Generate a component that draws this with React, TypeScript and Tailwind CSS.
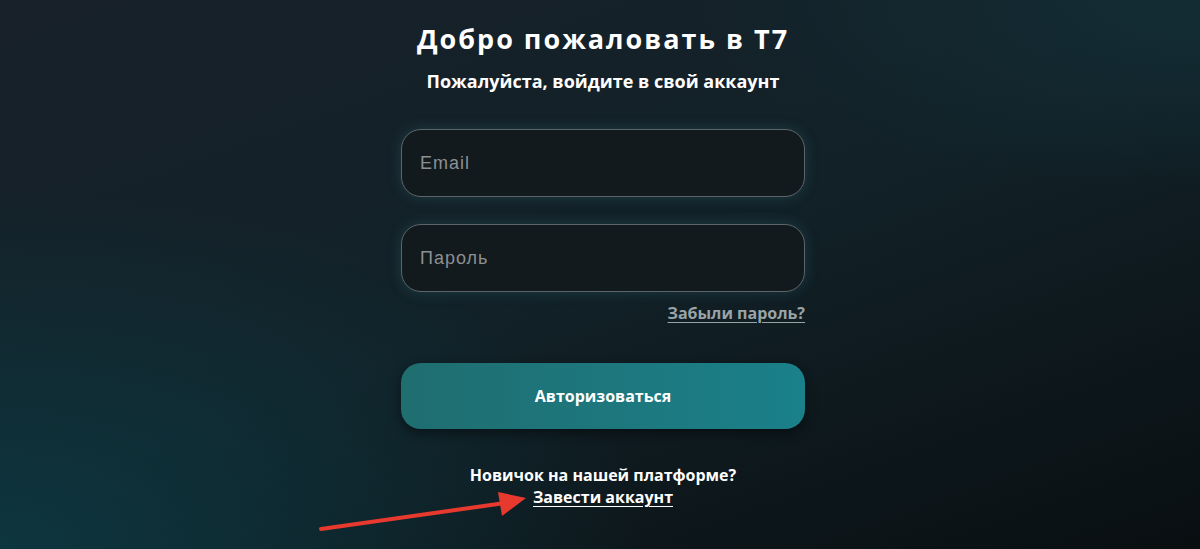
import React from "react";

export default function App() {
  const font = { fontFamily: "'Open Sans', 'Noto Sans', sans-serif" };
  return (
    <div
      className="relative w-full h-[549px] overflow-hidden flex flex-col items-center pl-[6px] bg-[#121b20]"
      style={{
        ...font,
        backgroundImage:
          "radial-gradient(ellipse 75% 90% at 0% 100%, rgba(13,55,64,0.95), rgba(13,55,64,0) 72%), radial-gradient(ellipse 60% 50% at 100% 0%, rgba(19,46,54,0.9), rgba(19,46,54,0) 70%), linear-gradient(160deg, #18212a 0%, #122128 50%, #090f11 100%)",
      }}
    >
      <h1 className="mt-[21px] text-[27px] leading-[36px] font-bold tracking-[2px] text-white">
        Добро пожаловать в Т7
      </h1>
      <p className="mt-[12px] text-[18px] leading-[24px] font-bold text-white">
        Пожалуйста, войдите в свой аккаунт
      </p>

      <div className="mt-[36px] w-[404px] flex flex-col">
        <div className="h-[68px] rounded-[20px] border border-[#5b6569] bg-[#131a1d] shadow-[0_0_14px_rgba(60,140,150,0.25)] flex items-center px-[18px]">
          <span className="text-[18px] tracking-[1px] text-[#8b9092]" style={{ fontFamily: "'Liberation Sans', Arial, sans-serif" }}>
            Email
          </span>
        </div>
        <div className="mt-[27px] h-[68px] rounded-[20px] border border-[#5b6569] bg-[#131a1d] shadow-[0_0_14px_rgba(60,140,150,0.25)] flex items-center px-[18px]">
          <span className="text-[18px] tracking-[1px] text-[#8b9092]" style={{ fontFamily: "'Liberation Sans', Arial, sans-serif" }}>
            Пароль
          </span>
        </div>
        <div className="mt-[10px] flex justify-end">
          <span className="text-[16px] leading-[22px] font-bold text-[#9aa3a6] underline underline-offset-[3px]">
            Забыли пароль?
          </span>
        </div>
        <button className="mt-[39px] h-[66px] rounded-[20px] bg-gradient-to-r from-[#1f6e70] to-[#1a808a] shadow-[0_4px_12px_rgba(0,0,0,0.45)] text-white text-[16px] font-bold">
          Авторизоваться
        </button>
      </div>

      <p className="mt-[35px] text-[16px] leading-[22px] font-bold text-white">Новичок на нашей платформе?</p>
      <p className="text-[16px] leading-[22px] font-bold text-white underline underline-offset-[3px]">Завести аккаунт</p>

      <svg className="absolute left-0 top-0" width="1200" height="549" viewBox="0 0 1200 549">
        <line x1="321" y1="529" x2="505" y2="503" stroke="#e8392f" strokeWidth="4" strokeLinecap="round" />
        <polygon points="526,498 498,492 502,516" fill="#e8392f" />
      </svg>
    </div>
  );
}
